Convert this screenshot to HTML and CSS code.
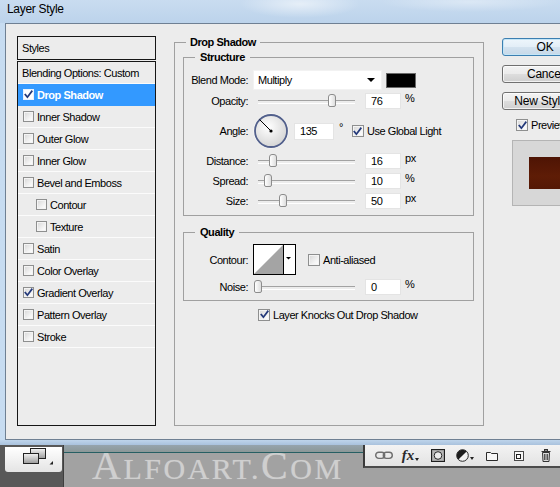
FILE: index.html
```html
<!DOCTYPE html>
<html>
<head>
<meta charset="utf-8">
<title>Layer Style</title>
<link rel="stylesheet" href="styles.css">
</head>
<body>
<div class="screen">
  <div class="titlebar"><span class="title">Layer Style</span></div>
  <div class="frame">
    <div class="client">
      <div class="styles-col">
        <div class="styles-head">Styles</div>
        <ul class="styles-list">
          <li class="row plain">Blending Options: Custom</li>
          <li class="row sel"><span class="cb sm on white"><svg viewBox="0 0 9 9"><path d="M1.3 4.6 L3.4 7.2 L7.8 1.3"/></svg></span><b>Drop Shadow</b></li>
          <li class="row"><span class="cb sm"></span>Inner Shadow</li>
          <li class="row"><span class="cb sm"></span>Outer Glow</li>
          <li class="row"><span class="cb sm"></span>Inner Glow</li>
          <li class="row"><span class="cb sm"></span>Bevel and Emboss</li>
          <li class="row indent"><span class="cb sm"></span>Contour</li>
          <li class="row indent"><span class="cb sm"></span>Texture</li>
          <li class="row"><span class="cb sm"></span>Satin</li>
          <li class="row"><span class="cb sm"></span>Color Overlay</li>
          <li class="row"><span class="cb sm on"><svg viewBox="0 0 9 9"><path d="M1.3 4.6 L3.4 7.2 L7.8 1.3"/></svg></span>Gradient Overlay</li>
          <li class="row"><span class="cb sm"></span>Pattern Overlay</li>
          <li class="row"><span class="cb sm"></span>Stroke</li>
        </ul>
      </div>

      <fieldset class="group outer">
        <legend>Drop Shadow</legend>
        <fieldset class="group sub structure">
          <legend>Structure</legend>
          <div class="frow blend">
            <span class="flabel">Blend Mode:</span>
            <span class="select"><span class="select-text">Multiply</span><svg class="arrow" width="8" height="4" viewBox="0 0 8 4"><polygon points="0,0 8,0 4,4" fill="#000"/></svg></span>
            <span class="swatch"></span>
          </div>
          <div class="frow opacity">
            <span class="flabel">Opacity:</span>
            <span class="slider"><span class="track"><span class="thumb" style="left:76%"></span></span></span>
            <span class="num">76</span><span class="unit">%</span>
          </div>
          <div class="frow angle">
            <span class="flabel">Angle:</span>
            <svg class="dial" width="36" height="36" viewBox="0 0 36 36">
              <defs>
                <radialGradient id="dg" cx="42%" cy="38%" r="65%">
                  <stop offset="0" stop-color="#ffffff"/>
                  <stop offset="1" stop-color="#d4d4d4"/>
                </radialGradient>
              </defs>
              <circle cx="18" cy="18" r="17.2" fill="none" stroke="#f7f7f7" stroke-width="1"/>
              <circle cx="18" cy="18" r="16" fill="url(#dg)" stroke="#52608c" stroke-width="1.8"/>
              <line x1="18" y1="18" x2="6.6" y2="6.6" stroke="#000" stroke-width="1"/>
              <circle cx="18" cy="18" r="1.6" fill="#000"/>
            </svg>
            <span class="num wide">135</span>
            <span class="deg">°</span>
            <span class="cb md on"><svg viewBox="0 0 9 9"><path d="M1.3 4.6 L3.4 7.2 L7.8 1.3"/></svg></span>
            <span class="cb-text">Use Global Light</span>
          </div>
          <div class="frow">
            <span class="flabel">Distance:</span>
            <span class="slider"><span class="track"><span class="thumb" style="left:15.5%"></span></span></span>
            <span class="num">16</span><span class="unit">px</span>
          </div>
          <div class="frow">
            <span class="flabel">Spread:</span>
            <span class="slider"><span class="track"><span class="thumb" style="left:10%"></span></span></span>
            <span class="num">10</span><span class="unit">%</span>
          </div>
          <div class="frow">
            <span class="flabel">Size:</span>
            <span class="slider"><span class="track"><span class="thumb" style="left:26%"></span></span></span>
            <span class="num">50</span><span class="unit">px</span>
          </div>
        </fieldset>

        <fieldset class="group sub quality">
          <legend>Quality</legend>
          <div class="frow contour">
            <span class="flabel">Contour:</span>
            <svg class="contour-box" width="43" height="31" viewBox="0 0 43 31">
              <rect x="0.5" y="0.5" width="42" height="30" fill="#fff" stroke="#000"/>
              <polygon points="1,30 30,1 30,30" fill="#a4a4a4"/>
              <line x1="30.5" y1="0" x2="30.5" y2="31" stroke="#000"/>
              <polygon points="33,13 38,13 35.5,15.6" fill="#000"/>
            </svg>
            <span class="cb md aa"></span>
            <span class="cb-text">Anti-aliased</span>
          </div>
          <div class="frow noise">
            <span class="flabel">Noise:</span>
            <span class="slider"><span class="track"><span class="thumb" style="left:0%"></span></span></span>
            <span class="num">0</span><span class="unit">%</span>
          </div>
        </fieldset>

        <div class="knock">
          <span class="cb md on"><svg viewBox="0 0 9 9"><path d="M1.3 4.6 L3.4 7.2 L7.8 1.3"/></svg></span>
          <span class="cb-text">Layer Knocks Out Drop Shadow</span>
        </div>
      </fieldset>

      <div class="side">
        <div class="btn default">OK</div>
        <div class="btn">Cancel</div>
        <div class="btn">New Style...</div>
        <div class="preview-row">
          <span class="cb md on"><svg viewBox="0 0 9 9"><path d="M1.3 4.6 L3.4 7.2 L7.8 1.3"/></svg></span>
          <span class="cb-text">Preview</span>
        </div>
        <div class="preview-box"><div class="preview-swatch"></div></div>
      </div>
    </div>
  </div>
  <div class="frame-bottom"></div>
  <div class="ps">
    <div class="ps-left">
      <div class="mode-btn">
        <svg width="31" height="17" viewBox="0 0 31 17">
          <defs>
            <linearGradient id="mg" x1="0" y1="0" x2="0" y2="1">
              <stop offset="0" stop-color="#f4f4f4"/>
              <stop offset="1" stop-color="#9a9a9a"/>
            </linearGradient>
          </defs>
          <rect x="7.5" y="0.5" width="15" height="10" fill="url(#mg)" stroke="#222"/>
          <rect x="0.5" y="5.5" width="15" height="10" fill="url(#mg)" stroke="#222"/>
          <polygon points="30,13 30,16.5 26.5,16.5" fill="#222"/>
        </svg>
      </div>
    </div>
    <div class="ps-main">
      <div class="canvas">
        <div class="canvas-edge"></div>
        <div class="watermark"><span class="wm-big">A</span>LFOART.<span class="wm-big">C</span>OM</div>
      </div>
      <div class="tools">
        <span class="tool">
          <svg width="18" height="9" viewBox="0 0 18 9"><rect x="0.7" y="1.2" width="9" height="6.2" rx="3.1" fill="none" stroke="#6e6e6e" stroke-width="1.4"/><rect x="8.3" y="1.2" width="9" height="6.2" rx="3.1" fill="none" stroke="#6e6e6e" stroke-width="1.4"/></svg>
        </span>
        <span class="tool"><span class="fx">fx</span><svg width="4" height="3" viewBox="0 0 4 3" class="tri"><polygon points="0,0 4,0 2,3" fill="#222"/></svg></span>
        <span class="tool">
          <svg width="14" height="13" viewBox="0 0 14 13"><rect x="0.5" y="0.5" width="13" height="12" fill="#8d8d8d" stroke="#1e1e1e"/><rect x="1.5" y="1.5" width="11" height="10" fill="#b8b8b8"/><circle cx="7" cy="6.5" r="3.8" fill="#ececec" stroke="#2a2a2a"/></svg>
        </span>
        <span class="tool">
          <svg width="13" height="13" viewBox="0 0 13 13"><circle cx="6.5" cy="6.5" r="5.8" fill="#f4f4f4" stroke="#2a2a2a"/><path d="M2.4 10.6 A5.8 5.8 0 0 1 10.6 2.4 Z" fill="#1e1e1e"/></svg><svg width="4" height="3" viewBox="0 0 4 3" class="tri"><polygon points="0,0 4,0 2,3" fill="#222"/></svg>
        </span>
        <span class="tool">
          <svg width="12" height="10" viewBox="0 0 12 10"><path d="M0.5 1.5 H4.5 L5.5 2.5 H11.5 V9.5 H0.5 Z" fill="#f6f6f6" stroke="#2a2a2a"/></svg>
        </span>
        <span class="tool">
          <svg width="10" height="10" viewBox="0 0 10 10"><rect x="0.5" y="0.5" width="9" height="9" fill="#f6f6f6" stroke="#4a4a4a"/><rect x="2.5" y="3.5" width="4" height="4" fill="none" stroke="#1e1e1e"/></svg>
        </span>
        <span class="tool">
          <svg width="10" height="13" viewBox="0 0 10 13"><rect x="3.5" y="0.5" width="3" height="1.5" fill="none" stroke="#333"/><path d="M0.5 2.5 H9.5" stroke="#333"/><path d="M1.5 3.5 H8.5 L8 12.5 H2 Z" fill="#dcdcdc" stroke="#333"/><path d="M3.5 5 V11 M5 5 V11 M6.5 5 V11" stroke="#555"/></svg>
        </span>
      </div>
    </div>
  </div>
</div>
</body>
</html>
```

FILE: styles.css
```css
* { box-sizing: border-box; }

html, body {
  margin: 0;
  padding: 0;
}

body {
  width: 560px;
  height: 487px;
  overflow: hidden;
  background: #5a5a5a;
  font-family: "Liberation Sans", Arial, sans-serif;
  font-size: 11px;
  letter-spacing: -0.45px;
  color: #000;
}

.screen {
  width: 560px;
  height: 487px;
  display: flex;
  flex-direction: column;
}

/* ---------- window chrome ---------- */
.titlebar {
  flex: none;
  height: 23px;
  padding: 2px 0 0 7px;
  font-size: 12px;
  letter-spacing: -0.3px;
  line-height: 14px;
  background:
    radial-gradient(ellipse 60px 14px at 300px 4px, rgba(255,255,255,0.55), rgba(255,255,255,0) 100%),
    radial-gradient(ellipse 90px 10px at 470px 2px, rgba(255,255,255,0.35), rgba(255,255,255,0) 100%),
    linear-gradient(#c9dcf0, #bcd3eb);
}

.frame {
  flex: none;
  height: 417px;
  display: flex;
  padding-left: 5px;
  background: linear-gradient(90deg, #c7dcf1, #bcd3ea);
}

.client {
  flex: 1;
  min-width: 0;
  height: 417px;
  display: flex;
  align-items: stretch;
  padding: 11px 0 13px 11px;
  background: #ececec;
  border: 1px solid #6f8093;
  border-right: 0;
  overflow: hidden;
}

.frame-bottom {
  flex: none;
  height: 5px;
  background: linear-gradient(#bed4eb, #a9c2dd);
}

/* ---------- styles list ---------- */
.styles-col {
  flex: none;
  width: 139px;
  margin: 1px 18px 0 0;
  display: flex;
  flex-direction: column;
}

.styles-head {
  height: 24px;
  border: 1px solid #161616;
  padding-left: 4px;
  display: flex;
  align-items: center;
}

.styles-list {
  flex: 1;
  margin: 1px 0 0;
  padding: 0;
  list-style: none;
  border: 1px solid #161616;
}

.row {
  height: 22px;
  border-bottom: 1px solid #fbfbfb;
  display: flex;
  align-items: center;
  gap: 3px;
  padding-left: 5px;
  white-space: nowrap;
}

.row.plain { padding-left: 4px; }
.row.indent { padding-left: 18px; }

.row.sel {
  background: #3399ff;
  border-bottom-color: #3399ff;
  color: #fff;
}

/* ---------- checkboxes ---------- */
.cb {
  flex: none;
  display: inline-flex;
  align-items: center;
  justify-content: center;
  border: 1px solid #8e8f8f;
  background: linear-gradient(135deg, #d6d6d6, #f6f6f6 70%, #ffffff);
  box-shadow: inset 0 0 0 1px #f4f4f4;
}

.cb.sm { width: 11px; height: 11px; }
.cb.md { width: 12px; height: 12px; }

.cb svg { width: 9px; height: 9px; display: block; }
.cb svg path {
  fill: none;
  stroke: #24397a;
  stroke-width: 1.7;
  stroke-linecap: square;
}

.cb.white {
  background: #fff;
  border-color: #e8f2ff;
  box-shadow: none;
}

.cb-text { margin-left: 3px; white-space: nowrap; }

/* ---------- group boxes ---------- */
.group {
  margin: 0;
  min-width: 0;
  border: 1px solid #a0a0a0;
}

.group > legend {
  font-weight: bold;
  line-height: 14px;
  padding: 0 4px;
}

.outer {
  flex: none;
  width: 310px;
  margin-right: 18px;
  padding: 0 9px 0 8px;
}

.outer > legend { margin-left: 3px; }

.sub { padding: 0; }
.sub > legend { margin-left: 11px; padding: 0 5px; }

.structure { margin-top: 1px; padding-bottom: 6px; }
.quality { margin-top: 9px; padding-bottom: 5px; }

.frow {
  display: flex;
  align-items: center;
  height: 16px;
  margin-top: 4px;
  white-space: nowrap;
}

.flabel {
  flex: none;
  width: 64px;
  margin-right: 5px;
  text-align: right;
}

.frow.blend { height: 20px; margin-top: 6px; }
.frow.opacity { margin-top: 3px; }
.frow.angle { height: 36px; }
.frow.contour { height: 31px; margin-top: 5px; }

/* select */
.select {
  flex: none;
  width: 129px;
  height: 20px;
  background: #fff;
  border: 1px solid #f2f2f2;
  display: flex;
  align-items: center;
  justify-content: space-between;
  padding: 0 6px 0 4px;
}

.arrow { display: block; }

.swatch {
  flex: none;
  width: 30px;
  height: 15px;
  margin-left: 4px;
  background: #000;
  border: 1px solid #6a6a6a;
}

/* slider */
.slider {
  flex: none;
  width: 107px;
  height: 16px;
  padding: 0 5px;
  display: flex;
}

.track {
  flex: 1;
  position: relative;
}

.track::before {
  content: "";
  position: absolute;
  left: 0;
  right: 0;
  top: 7px;
  height: 2px;
  border-top: 1px solid #a2a2a2;
  border-bottom: 1px solid #ffffff;
}

.thumb {
  position: absolute;
  top: 1px;
  width: 8px;
  height: 13px;
  margin-left: -4px;
  border: 1px solid #8c8c8c;
  border-radius: 3px 3px 2px 2px;
  background: linear-gradient(90deg, #ffffff, #dedede);
}

/* numeric fields */
.num {
  flex: none;
  width: 36px;
  height: 16px;
  margin-left: 5px;
  padding-left: 5px;
  background: #fff;
  border: 1px solid #e4e4e4;
  display: flex;
  align-items: center;
}

.num.wide { width: 40px; height: 17px; }

.unit { margin-left: 4px; align-self: flex-start; margin-top: -1px; }

.dial { flex: none; display: block; }

.deg {
  align-self: flex-start;
  margin: 8px 0 0 5px;
  font-size: 11px;
}

.angle .cb { margin-left: 9px; }

/* contour */
.contour-box { flex: none; display: block; }
.cb.aa { margin-left: 12px; }

.knock {
  display: flex;
  align-items: center;
  height: 13px;
  margin: 7px 0 0 75px;
}

/* ---------- right column ---------- */
.side {
  flex: none;
  width: 90px;
  padding-top: 3px;
  display: flex;
  flex-direction: column;
}

.btn {
  flex: none;
  width: 86px;
  height: 18px;
  margin-bottom: 9px;
  border: 1px solid #707070;
  border-radius: 3px;
  background: linear-gradient(#f3f3f3 0%, #ebebeb 48%, #dddddd 52%, #cfcfcf 100%);
  box-shadow: inset 0 0 0 1px rgba(255,255,255,0.7);
  font-size: 12px;
  letter-spacing: -0.2px;
  display: flex;
  align-items: center;
  justify-content: center;
  white-space: nowrap;
}

.btn.default {
  border-color: #3c7fb1;
  background: linear-gradient(#eef6fc 0%, #e3eef7 48%, #d3e2ef 52%, #c6d8e8 100%);
  box-shadow: inset 0 0 0 1px #c4e5f6;
}

.preview-row {
  display: flex;
  align-items: center;
  height: 12px;
  padding-left: 14px;
}

.preview-box {
  width: 66px;
  height: 66px;
  margin: 9px 0 0 10px;
  padding: 16px;
  background: #d7d7d7;
  border: 1px solid #b4b4b4;
}

.preview-swatch {
  width: 32px;
  height: 32px;
  background: linear-gradient(#4e1404, #5e1c06 60%, #541805);
}

/* ---------- photoshop workspace ---------- */
.ps {
  flex: 1;
  display: flex;
  background: #a2a2a2;
}

.ps-left {
  flex: none;
  width: 64px;
  padding: 2px 0 0 5px;
  background: #585858;
  border-right: 1px solid #3e3e3e;
}

.mode-btn {
  width: 57px;
  height: 25px;
  padding: 1px 0 0 18px;
  border-radius: 0 0 3px 3px;
  background: linear-gradient(#ffffff, #e4e4e4);
}

.mode-btn svg { display: block; }

.ps-main {
  flex: 1;
  display: flex;
  align-items: flex-start;
}

.canvas {
  flex: 1;
  align-self: stretch;
  overflow: hidden;
}

.canvas-edge {
  height: 8px;
  background: linear-gradient(#96a4ad, #8b9797);
  border-bottom: 1px solid #265f63;
}

.watermark {
  padding-left: 28px;
  font-family: "Liberation Serif", "Times New Roman", serif;
  font-size: 30px;
  line-height: 26px;
  letter-spacing: 2.5px;
  color: #cfcfcf;
  text-shadow: 0 0 1px rgba(255,255,255,0.3);
  white-space: nowrap;
}

.wm-big { font-size: 40px; }

.tools {
  flex: none;
  width: 197px;
  height: 23px;
  padding-left: 5px;
  display: flex;
  align-items: center;
  background: linear-gradient(#f3f3f3, #e3e3e3);
  border-left: 2px solid #3a3a3a;
  border-bottom: 2px solid #4b4b4b;
}

.tool {
  flex: none;
  width: 27px;
  display: flex;
  align-items: center;
  justify-content: center;
}

.tool svg { display: block; }

.tool .tri { align-self: flex-end; margin: 0 0 2px 1px; }

.fx {
  font-family: "Liberation Serif", "Times New Roman", serif;
  font-style: italic;
  font-weight: bold;
  font-size: 15px;
  line-height: 15px;
  letter-spacing: 0;
  color: #2a2a2a;
}
```
